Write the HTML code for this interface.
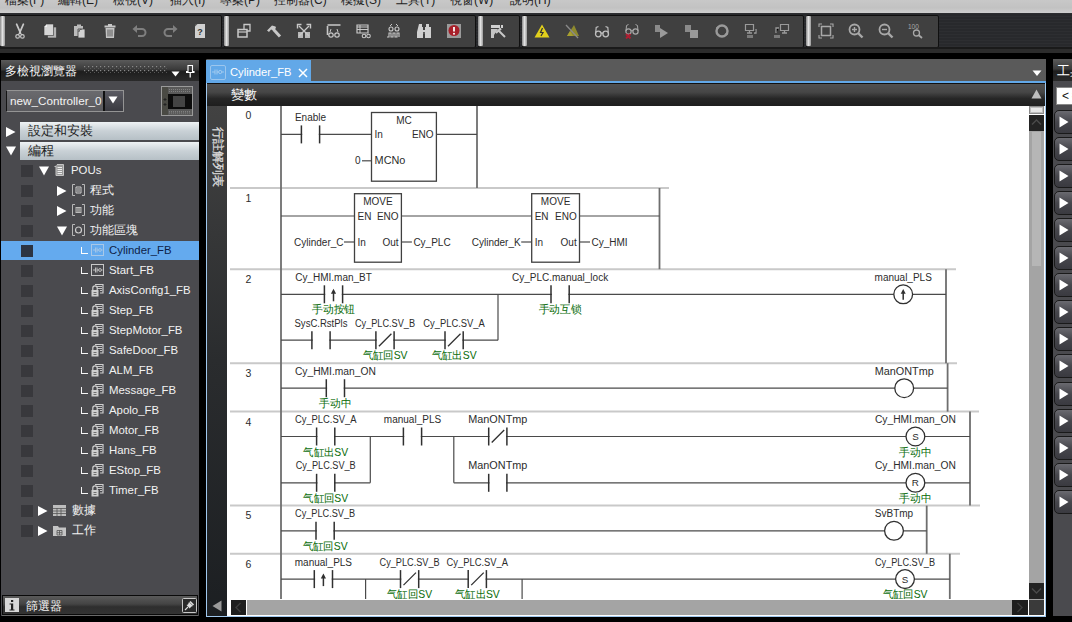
<!DOCTYPE html>
<html><head><meta charset="utf-8">
<style>
*{box-sizing:border-box;margin:0;padding:0}
html,body{width:1072px;height:622px;overflow:hidden;background:#000;font-family:"Liberation Sans",sans-serif;position:relative}
.a{position:absolute}
#menu{left:0;top:0;width:1072px;height:13px;background:linear-gradient(#c8c8c8,#c2c2c2 60%,#cfcfcf);overflow:hidden}
#menu span{position:absolute;top:-8px;font-size:12px;color:#222;white-space:nowrap}
#tb{left:0;top:13px;width:1072px;height:35px;background:repeating-linear-gradient(#2d2e31 0,#2d2e31 1.5px,#28292c 1.5px,#28292c 3px)}
.grp{position:absolute;top:1.5px;height:33px;background:#404040;border:1.5px solid #101010;border-radius:2px}
.hdl{position:absolute;top:3px;width:5px;height:30px;background:linear-gradient(90deg,#8a8a8a,#e2e2e2 50%,#9a9a9a);border-radius:1px}
#tb2{left:0;top:47px;width:1072px;height:6px;background:linear-gradient(#1a1a1a 0,#1a1a1a 2px,#2c2c2c 2px)}
/* left panel */
#lp{left:1px;top:60px;width:198px;height:556px;background:#4a4a4e}
#lph{left:1px;top:60px;width:198px;height:21px;background:linear-gradient(#5a5a5a,#3a3a3a 45%,#1e1e1e 55%,#2a2a2a);}
#lpm{left:1px;top:81px;width:198px;height:40px;background:#49494d}
.sec{position:absolute;left:20px;width:179px;height:18px;background:linear-gradient(#eef2f4,#c9d1d6 50%,#b6c0c6);font-size:13px;color:#1e1e1e;padding-left:8px;line-height:18px}
.t{white-space:nowrap;line-height:18px}
.trow{position:absolute;left:1px;width:198px;height:20px;font-size:11px;color:#eee;line-height:20px;white-space:nowrap}
.sq{position:absolute;left:20px;top:4px;width:13px;height:12px;background:#38383c}
.tri{position:absolute;font-size:11px;color:#fff}
#lpf{left:2px;top:595px;width:196px;height:20px;background:linear-gradient(#5a5a5a,#444 45%,#2e2e2e 60%,#333);border:1.5px solid #0a0a0a;box-shadow:0 1px 0 #6a6a6a}
/* editor */
#ed{left:206px;top:59px;width:840px;height:558px;background:#555}
#tabs{left:206px;top:59px;width:840px;height:23px;background:#5a5a5a;border-left:1px solid #3a3a3a}
#tab{left:206px;top:60px;width:105px;height:22px;background:#62a8e8}
#frame{left:206px;top:82px;width:840px;height:535px;border:1px solid #a0c8ee;background:#fff}
#hdr{left:207px;top:83px;width:838px;height:23px;background:linear-gradient(#111 0,#111 1px,#505050 1px,#464646 40%,#262626 68%,#1e1e1e)}
#rc{left:207px;top:106px;width:20px;height:510px;background:linear-gradient(#424242,#2a2c2e 50%,#1c1f22)}
#lad{left:227px;top:106px;width:802px;height:494px;background:#fff;overflow:hidden}
#vs{left:1029px;top:106px;width:15px;height:494px;background:#a4a4a4}
#hs{left:227px;top:600px;width:802px;height:16px;background:#fff}
/* right panel */
#rp{left:1053px;top:59px;width:19px;height:557px;background:#4a4a4e}
#rph{left:1053px;top:59px;width:19px;height:22px;background:linear-gradient(#5a5a5a,#3a3a3a 45%,#1e1e1e 55%,#2a2a2a)}
</style></head><body>
<div id="menu" class="a">
<span style="left:5px">檔案(F)</span><span style="left:58px">編輯(E)</span><span style="left:113px">檢視(V)</span><span style="left:170px">插入(I)</span><span style="left:220px">專案(P)</span><span style="left:274px">控制器(C)</span><span style="left:341px">模擬(S)</span><span style="left:396px">工具(T)</span><span style="left:450px">視窗(W)</span><span style="left:510px">說明(H)</span>
</div>
<div id="tb" class="a">
<div class="grp" style="left:0;width:222px"></div><div class="hdl" style="left:0"></div>
<div class="grp" style="left:224px;width:252px"></div><div class="hdl" style="left:224px"></div>
<div class="grp" style="left:478px;width:42px"></div><div class="hdl" style="left:478px"></div>
<div class="grp" style="left:522px;width:282px"></div><div class="hdl" style="left:522px"></div>
<div class="grp" style="left:806px;width:133px"></div><div class="hdl" style="left:806px"></div>
</div>
<div id="tb2" class="a"></div>
<svg class="a" style="left:12.0px;top:23.0px" width="16" height="16" viewBox="0 0 16 16"><path d="M4.6,1.2L8.3,9.6M11.4,1.2L7.7,9.6" stroke="#c8c8c8" stroke-width="1.7" stroke-linecap="round" fill="none"/><path d="M7.8,9.5L6.2,12M8.2,9.5L9.8,12" stroke="#c8c8c8" stroke-width="1.1"/><circle cx="5.6" cy="13.4" r="1.8" fill="none" stroke="#c8c8c8" stroke-width="1.2"/><circle cx="10.4" cy="13.4" r="1.8" fill="none" stroke="#c8c8c8" stroke-width="1.2"/></svg>
<svg class="a" style="left:42.0px;top:23.0px" width="16" height="16" viewBox="0 0 16 16"><path d="M5.5,4H14.5V15H5.5Z" fill="#b4b4b4" stroke="#333" stroke-width="0.6"/><path d="M2,4L5,1H11.5V12.5H2Z" fill="#d6d6d6" stroke="#333" stroke-width="0.6"/><path d="M2,4H5V1Z" fill="#f0f0f0"/></svg>
<svg class="a" style="left:72.0px;top:23.0px" width="16" height="16" viewBox="0 0 16 16"><path d="M2,3H5V1.5H9V3H11V13H2Z" fill="#bbb"/><path d="M6,6H13V15H6Z" fill="#d2d2d2" stroke="#3f3f3f" stroke-width="0.8"/><path d="M7,9A2,2 0 0 1 9.5,6.5" stroke="#444" fill="none"/></svg>
<svg class="a" style="left:102.0px;top:23.0px" width="16" height="16" viewBox="0 0 16 16"><path d="M2.5,2.5H13.5V4.5H2.5Z M6,1H10V2.5H6Z" fill="#c8c8c8"/><path d="M3.5,5H12.5L12,15H4Z" fill="#c4c4c4"/><path d="M6,6.5V13.5M8,6.5V13.5M10,6.5V13.5" stroke="#5a5a5a" stroke-width="1"/></svg>
<svg class="a" style="left:132.0px;top:23.0px" width="16" height="16" viewBox="0 0 16 16"><path d="M3,6H10A3.5,3.5 0 0 1 10,13H6" stroke="#7f7f7f" stroke-width="2" fill="none"/><path d="M0.5,6L5,2V10Z" fill="#7f7f7f"/></svg>
<svg class="a" style="left:162.0px;top:23.0px" width="16" height="16" viewBox="0 0 16 16"><path d="M13,6H6A3.5,3.5 0 0 0 6,13H10" stroke="#7f7f7f" stroke-width="2" fill="none"/><path d="M15.5,6L11,2V10Z" fill="#7f7f7f"/></svg>
<svg class="a" style="left:192.0px;top:23.0px" width="16" height="16" viewBox="0 0 16 16"><path d="M3,1H13V15H3Z" fill="#d0d0d0"/><path d="M3,1L5.5,1L3,3.5Z" fill="#555"/><text x="8" y="12" font-size="9" font-weight="bold" text-anchor="middle" fill="#333" font-family="Liberation Sans">?</text></svg>
<svg class="a" style="left:236.0px;top:23.0px" width="16" height="16" viewBox="0 0 16 16"><path d="M8,1.5H14V8H8Z" fill="none" stroke="#c8c8c8" stroke-width="1.3"/><path d="M2,6.5H11V14H2Z" fill="#404040" stroke="#c8c8c8" stroke-width="1.5"/><path d="M2,9H11" stroke="#c8c8c8" stroke-width="1.2"/></svg>
<svg class="a" style="left:266.0px;top:23.0px" width="16" height="16" viewBox="0 0 16 16"><path d="M1,7.5L6,2.5L9.5,3.5L10,5L7.5,7.5L5,6.5L3,9Z" fill="#c8c8c8"/><path d="M7.5,6.5L14,13.5" stroke="#c8c8c8" stroke-width="3"/></svg>
<svg class="a" style="left:296.0px;top:23.0px" width="16" height="16" viewBox="0 0 16 16"><path d="M2,9H7V15H2ZM9,9H14V15H9Z" fill="#b8b8b8"/><path d="M3,3L13,13M13,3L3,13" stroke="#c8c8c8" stroke-width="1.3"/><path d="M1.5,5.5V1.5H5.5M14.5,5.5V1.5H10.5" stroke="#c8c8c8" stroke-width="1.4" fill="none"/></svg>
<svg class="a" style="left:326.0px;top:23.0px" width="16" height="16" viewBox="0 0 16 16"><path d="M1.5,2H14.5M1.5,3V12" stroke="#c8c8c8" stroke-width="1.6" fill="none"/><circle cx="5" cy="12" r="2.2" fill="none" stroke="#c8c8c8" stroke-width="1.2"/><circle cx="11" cy="12" r="2.2" fill="none" stroke="#c8c8c8" stroke-width="1.2"/><path d="M4,9L5,6M12,9L11,6" stroke="#c8c8c8"/></svg>
<svg class="a" style="left:356.0px;top:23.0px" width="16" height="16" viewBox="0 0 16 16"><path d="M1,2H12V10H1Z" fill="none" stroke="#c8c8c8" stroke-width="1.2"/><path d="M1,4H12M1,6.5H12M4,2V10" stroke="#c8c8c8" stroke-width="1"/><circle cx="8" cy="13" r="1.8" fill="none" stroke="#c8c8c8" stroke-width="1.1"/><circle cx="12.5" cy="13" r="1.8" fill="none" stroke="#c8c8c8" stroke-width="1.1"/></svg>
<svg class="a" style="left:386.0px;top:23.0px" width="16" height="16" viewBox="0 0 16 16"><circle cx="5" cy="6" r="2" fill="none" stroke="#c8c8c8" stroke-width="1.1"/><circle cx="11" cy="6" r="2" fill="none" stroke="#c8c8c8" stroke-width="1.1"/><path d="M4,3L6,1M12,3L10,1" stroke="#c8c8c8"/><path d="M1,14H3V10H5V14H7V10H9V14H11V10H13V14" stroke="#c8c8c8" stroke-width="1.1" fill="none"/></svg>
<svg class="a" style="left:416.0px;top:23.0px" width="16" height="16" viewBox="0 0 16 16"><path d="M3,1H6V4H7V15H1L1,9Z M10,1H13V4H15L15,15H9V4H10Z" fill="#d0d0d0"/><path d="M6,7H10V11H6Z" fill="#d0d0d0"/><circle cx="8" cy="10" r="1" fill="#333"/></svg>
<svg class="a" style="left:446.0px;top:23.0px" width="16" height="16" viewBox="0 0 16 16"><rect x="1" y="1" width="14" height="14" fill="#9a9a9a"/><circle cx="8" cy="7.5" r="5.5" fill="#a8202a"/><path d="M8,4V8.5" stroke="#fff" stroke-width="1.8"/><circle cx="8" cy="10.7" r="1" fill="#fff"/></svg>
<svg class="a" style="left:490.0px;top:23.0px" width="16" height="16" viewBox="0 0 16 16"><path d="M1,2H10V5H1ZM11,2H13V5H11Z" fill="#d0d0d0"/><path d="M1,6H8L4,12V15H1Z" fill="#c4c4c4"/><path d="M6,10L10,6L11,7M9,8L15,14" stroke="#c8c8c8" stroke-width="2"/></svg>
<svg class="a" style="left:534.0px;top:23.0px" width="16" height="16" viewBox="0 0 16 16"><path d="M8,1.5L15.5,14.5H0.5Z" fill="#e2d01c"/><path d="M8.5,5L6.5,9.5H9L7,13" stroke="#333" stroke-width="1.2" fill="none"/></svg>
<svg class="a" style="left:564.0px;top:23.0px" width="16" height="16" viewBox="0 0 16 16"><path d="M10,2L15,13H3Z" fill="#8e8a2e"/><path d="M6,8L9,13H3Z" fill="#a8a030"/><path d="M2,2L14,15" stroke="#8a8a8a" stroke-width="1.3"/></svg>
<svg class="a" style="left:594.0px;top:23.0px" width="16" height="16" viewBox="0 0 16 16"><circle cx="4.3" cy="11" r="2.8" fill="none" stroke="#bdbdbd" stroke-width="1.3"/><circle cx="11.7" cy="11" r="2.8" fill="none" stroke="#bdbdbd" stroke-width="1.3"/><path d="M1.6,10.5L2.2,4.5L4.5,3.5M14.4,10.5L13.8,4.5L11.5,3.5M7,10.5Q8,9.5 9,10.5" stroke="#bdbdbd" stroke-width="1.2" fill="none"/></svg>
<svg class="a" style="left:624.0px;top:23.0px" width="16" height="16" viewBox="0 0 16 16"><circle cx="4.5" cy="8.5" r="2.6" fill="none" stroke="#a8a8a8" stroke-width="1.2"/><circle cx="11.5" cy="8.5" r="2.6" fill="none" stroke="#a8a8a8" stroke-width="1.2"/><path d="M2,8L2.5,2.5L4.5,1.5M14,8L13.5,2.5L11.5,1.5M7,8Q8,7 9,8" stroke="#a8a8a8" fill="none"/><path d="M2,11L6.5,15.5M6.5,11L2,15.5" stroke="#b01c30" stroke-width="1.9"/></svg>
<svg class="a" style="left:654.0px;top:23.0px" width="16" height="16" viewBox="0 0 16 16"><path d="M1,2H6V9H1Z" fill="#8a8a8a"/><path d="M6,5L14,10L6,15Z" fill="#9a9a9a"/></svg>
<svg class="a" style="left:684.0px;top:23.0px" width="16" height="16" viewBox="0 0 16 16"><path d="M1,2H7V9H1Z" fill="#8a8a8a"/><path d="M6,7H14V15H6Z" fill="#9a9a9a"/></svg>
<svg class="a" style="left:714.0px;top:23.0px" width="16" height="16" viewBox="0 0 16 16"><circle cx="8" cy="8" r="5.5" fill="none" stroke="#9a9a9a" stroke-width="2.4"/><path d="M2,4L5,5L3,7Z M14,12L11,11L13,9Z" fill="#9a9a9a"/></svg>
<svg class="a" style="left:744.0px;top:23.0px" width="16" height="16" viewBox="0 0 16 16"><path d="M1.5,1.5H9.5V7.5H1.5Z" fill="none" stroke="#9a9a9a" stroke-width="1.2"/><path d="M5.5,8V10M3,10H8M12,6V10H10M4,12V15M6,12V15M8,12V15" stroke="#9a9a9a" stroke-width="1.3"/></svg>
<svg class="a" style="left:774.0px;top:23.0px" width="16" height="16" viewBox="0 0 16 16"><path d="M6.5,1.5H14.5V7.5H6.5Z" fill="none" stroke="#9a9a9a" stroke-width="1.2"/><path d="M10.5,8V10M8,10H13M2,10V5H5M1,12V15M3,12V15M5,12V15" stroke="#9a9a9a" stroke-width="1.3"/></svg>
<svg class="a" style="left:818.0px;top:23.0px" width="16" height="16" viewBox="0 0 16 16"><path d="M1,4V1H4M12,1H15V4M15,12V15H12M4,15H1V12" stroke="#a8a8a8" stroke-width="1.1" fill="none"/><rect x="3.5" y="3.5" width="9" height="9" fill="none" stroke="#a8a8a8" stroke-width="1.5"/></svg>
<svg class="a" style="left:848.0px;top:23.0px" width="16" height="16" viewBox="0 0 16 16"><circle cx="6.5" cy="6.5" r="5" fill="none" stroke="#a8a8a8" stroke-width="1.8"/><path d="M10,10L14.5,14.5" stroke="#a8a8a8" stroke-width="2.4"/><path d="M4,6.5H9M6.5,4V9" stroke="#a8a8a8" stroke-width="1.4"/></svg>
<svg class="a" style="left:878.0px;top:23.0px" width="16" height="16" viewBox="0 0 16 16"><circle cx="6.5" cy="6.5" r="5" fill="none" stroke="#a8a8a8" stroke-width="1.8"/><path d="M10,10L14.5,14.5" stroke="#a8a8a8" stroke-width="2.4"/><path d="M4,6.5H9" stroke="#a8a8a8" stroke-width="1.4"/></svg>
<svg class="a" style="left:908.0px;top:23.0px" width="16" height="16" viewBox="0 0 16 16"><text x="0" y="6" font-size="6.5" fill="#a8a8a8" font-family="Liberation Sans">100</text><circle cx="8.5" cy="10" r="3" fill="none" stroke="#a8a8a8" stroke-width="1.3"/><path d="M10.5,12L14,15" stroke="#a8a8a8" stroke-width="1.8"/></svg>

<div id="lp" class="a"></div>
<div id="lph" class="a"></div>
<div class="a sec" style="top:122px">設定和安裝</div>
<div class="a sec" style="top:142px">編程</div>
<svg class="a" style="left:6px;top:126.5px" width="10" height="10"><path d="M0,0 L9.5,5 L0,10Z" fill="#fff"/></svg>
<svg class="a" style="left:6px;top:145.5px" width="10" height="10"><path d="M0,0.5 L10,0.5 L5,9.5Z" fill="#fff"/></svg>
<div class="a" style="left:21px;top:165px;width:12px;height:12px;background:#38383c"></div>
<svg class="a" style="left:39px;top:165.5px" width="10" height="10"><path d="M0,0.5 L10,0.5 L5,9.5Z" fill="#fff"/></svg>
<svg class="a" style="left:54px;top:164px" width="10" height="12"><path d="M0.5,2.5H2V11.5H9.5V0.5H3" fill="#9a9a9a" stroke="#c4c4c4"/><path d="M3.5,3.5H8M3.5,5.5H8M3.5,7.5H8M3.5,9.5H8" stroke="#eee" stroke-width="1"/></svg>
<div class="a t" style="left:71px;top:161px;font-size:11.4px;color:#f2f2f2">POUs</div>
<div class="a" style="left:21px;top:185px;width:12px;height:12px;background:#38383c"></div>
<svg class="a" style="left:57px;top:185.5px" width="10" height="10"><path d="M0,0 L9.5,5 L0,10Z" fill="#fff"/></svg>
<svg class="a" style="left:72px;top:184px" width="13" height="12"><path d="M3,0.5H0.5V11.5H3M10,0.5H12.5V11.5H10" fill="none" stroke="#b8b8b8" stroke-width="1"/><path d="M4,3H9V9H4Z" fill="none" stroke="#ccc" stroke-width="1"/><path d="M5,5H8M5,7H8" stroke="#ccc"/></svg>
<div class="a t" style="left:90px;top:181px;font-size:12.3px;color:#f2f2f2">程式</div>
<div class="a" style="left:21px;top:205px;width:12px;height:12px;background:#38383c"></div>
<svg class="a" style="left:57px;top:205.5px" width="10" height="10"><path d="M0,0 L9.5,5 L0,10Z" fill="#fff"/></svg>
<svg class="a" style="left:72px;top:204px" width="13" height="12"><path d="M3,0.5H0.5V11.5H3M10,0.5H12.5V11.5H10" fill="none" stroke="#b8b8b8" stroke-width="1"/><path d="M3.5,3H9.5V9H3.5Z" fill="#bbb"/><path d="M4,5H9M4,7H9" stroke="#666"/></svg>
<div class="a t" style="left:90px;top:201px;font-size:12.3px;color:#f2f2f2">功能</div>
<div class="a" style="left:21px;top:225px;width:12px;height:12px;background:#38383c"></div>
<svg class="a" style="left:57px;top:225.5px" width="10" height="10"><path d="M0,0.5 L10,0.5 L5,9.5Z" fill="#fff"/></svg>
<svg class="a" style="left:72px;top:224px" width="13" height="12"><path d="M3,0.5H0.5V11.5H3M10,0.5H12.5V11.5H10" fill="none" stroke="#b8b8b8" stroke-width="1"/><circle cx="6.5" cy="6" r="3" fill="none" stroke="#ccc" stroke-width="1.2"/></svg>
<div class="a t" style="left:90px;top:221px;font-size:12.3px;color:#f2f2f2">功能區塊</div>
<div class="a" style="left:1px;top:241px;width:198px;height:19px;background:#64aaee"></div>
<div class="a" style="left:21px;top:245px;width:12px;height:12px;background:#2c3442"></div>
<div class="a" style="left:81px;top:247px;width:7px;height:7px;border-left:1.5px solid #ffffff;border-bottom:1.5px solid #ffffff"></div>
<svg class="a" style="left:91px;top:244px" width="13" height="12"><rect x="0.5" y="0.5" width="12" height="11" fill="none" stroke="#a8c8e8" stroke-width="1"/><path d="M2,6H4.5M4.5,3.5V8.5M6,3.5V8.5M6,6H7.5M10.5,6H11.5" stroke="#a8c8e8" stroke-width="0.9" fill="none"/><circle cx="9" cy="6" r="1.4" fill="none" stroke="#a8c8e8" stroke-width="0.9"/></svg>
<div class="a t" style="left:109px;top:241px;font-size:11.4px;color:#0e1e48">Cylinder_FB</div>
<div class="a" style="left:21px;top:265px;width:12px;height:12px;background:#38383c"></div>
<div class="a" style="left:81px;top:267px;width:7px;height:7px;border-left:1.5px solid #f4f4f4;border-bottom:1.5px solid #f4f4f4"></div>
<svg class="a" style="left:91px;top:264px" width="13" height="12"><rect x="0.5" y="0.5" width="12" height="11" fill="none" stroke="#c8c8c8" stroke-width="1"/><path d="M2,6H4.5M4.5,3.5V8.5M6,3.5V8.5M6,6H7.5M10.5,6H11.5" stroke="#c8c8c8" stroke-width="0.9" fill="none"/><circle cx="9" cy="6" r="1.4" fill="none" stroke="#c8c8c8" stroke-width="0.9"/></svg>
<div class="a t" style="left:109px;top:261px;font-size:11.4px;color:#f2f2f2">Start_FB</div>
<div class="a" style="left:21px;top:285px;width:12px;height:12px;background:#38383c"></div>
<div class="a" style="left:81px;top:287px;width:7px;height:7px;border-left:1.5px solid #f4f4f4;border-bottom:1.5px solid #f4f4f4"></div>
<svg class="a" style="left:91px;top:283px" width="13" height="14"><path d="M4,1.5H12V10H9" fill="none" stroke="#cfcfcf" stroke-width="1.2"/><path d="M6,3.5H11M6,5.5H11M9,7.5H11" stroke="#cfcfcf" stroke-width="0.9"/><rect x="0.5" y="7" width="7" height="6.5" fill="#cfcfcf"/><path d="M1.8,7V5A2.2,2.2 0 0 1 6.2,5V7" fill="none" stroke="#cfcfcf" stroke-width="1.2"/><path d="M2.5,9.5H5.5M2.5,11.5H5.5" stroke="#555" stroke-width="0.8"/></svg>
<div class="a t" style="left:109px;top:281px;font-size:11.4px;color:#f2f2f2">AxisConfig1_FB</div>
<div class="a" style="left:21px;top:305px;width:12px;height:12px;background:#38383c"></div>
<div class="a" style="left:81px;top:307px;width:7px;height:7px;border-left:1.5px solid #f4f4f4;border-bottom:1.5px solid #f4f4f4"></div>
<svg class="a" style="left:91px;top:303px" width="13" height="14"><path d="M4,1.5H12V10H9" fill="none" stroke="#cfcfcf" stroke-width="1.2"/><path d="M6,3.5H11M6,5.5H11M9,7.5H11" stroke="#cfcfcf" stroke-width="0.9"/><rect x="0.5" y="7" width="7" height="6.5" fill="#cfcfcf"/><path d="M1.8,7V5A2.2,2.2 0 0 1 6.2,5V7" fill="none" stroke="#cfcfcf" stroke-width="1.2"/><path d="M2.5,9.5H5.5M2.5,11.5H5.5" stroke="#555" stroke-width="0.8"/></svg>
<div class="a t" style="left:109px;top:301px;font-size:11.4px;color:#f2f2f2">Step_FB</div>
<div class="a" style="left:21px;top:325px;width:12px;height:12px;background:#38383c"></div>
<div class="a" style="left:81px;top:327px;width:7px;height:7px;border-left:1.5px solid #f4f4f4;border-bottom:1.5px solid #f4f4f4"></div>
<svg class="a" style="left:91px;top:323px" width="13" height="14"><path d="M4,1.5H12V10H9" fill="none" stroke="#cfcfcf" stroke-width="1.2"/><path d="M6,3.5H11M6,5.5H11M9,7.5H11" stroke="#cfcfcf" stroke-width="0.9"/><rect x="0.5" y="7" width="7" height="6.5" fill="#cfcfcf"/><path d="M1.8,7V5A2.2,2.2 0 0 1 6.2,5V7" fill="none" stroke="#cfcfcf" stroke-width="1.2"/><path d="M2.5,9.5H5.5M2.5,11.5H5.5" stroke="#555" stroke-width="0.8"/></svg>
<div class="a t" style="left:109px;top:321px;font-size:11.4px;color:#f2f2f2">StepMotor_FB</div>
<div class="a" style="left:21px;top:345px;width:12px;height:12px;background:#38383c"></div>
<div class="a" style="left:81px;top:347px;width:7px;height:7px;border-left:1.5px solid #f4f4f4;border-bottom:1.5px solid #f4f4f4"></div>
<svg class="a" style="left:91px;top:343px" width="13" height="14"><path d="M4,1.5H12V10H9" fill="none" stroke="#cfcfcf" stroke-width="1.2"/><path d="M6,3.5H11M6,5.5H11M9,7.5H11" stroke="#cfcfcf" stroke-width="0.9"/><rect x="0.5" y="7" width="7" height="6.5" fill="#cfcfcf"/><path d="M1.8,7V5A2.2,2.2 0 0 1 6.2,5V7" fill="none" stroke="#cfcfcf" stroke-width="1.2"/><path d="M2.5,9.5H5.5M2.5,11.5H5.5" stroke="#555" stroke-width="0.8"/></svg>
<div class="a t" style="left:109px;top:341px;font-size:11.4px;color:#f2f2f2">SafeDoor_FB</div>
<div class="a" style="left:21px;top:365px;width:12px;height:12px;background:#38383c"></div>
<div class="a" style="left:81px;top:367px;width:7px;height:7px;border-left:1.5px solid #f4f4f4;border-bottom:1.5px solid #f4f4f4"></div>
<svg class="a" style="left:91px;top:363px" width="13" height="14"><path d="M4,1.5H12V10H9" fill="none" stroke="#cfcfcf" stroke-width="1.2"/><path d="M6,3.5H11M6,5.5H11M9,7.5H11" stroke="#cfcfcf" stroke-width="0.9"/><rect x="0.5" y="7" width="7" height="6.5" fill="#cfcfcf"/><path d="M1.8,7V5A2.2,2.2 0 0 1 6.2,5V7" fill="none" stroke="#cfcfcf" stroke-width="1.2"/><path d="M2.5,9.5H5.5M2.5,11.5H5.5" stroke="#555" stroke-width="0.8"/></svg>
<div class="a t" style="left:109px;top:361px;font-size:11.4px;color:#f2f2f2">ALM_FB</div>
<div class="a" style="left:21px;top:385px;width:12px;height:12px;background:#38383c"></div>
<div class="a" style="left:81px;top:387px;width:7px;height:7px;border-left:1.5px solid #f4f4f4;border-bottom:1.5px solid #f4f4f4"></div>
<svg class="a" style="left:91px;top:383px" width="13" height="14"><path d="M4,1.5H12V10H9" fill="none" stroke="#cfcfcf" stroke-width="1.2"/><path d="M6,3.5H11M6,5.5H11M9,7.5H11" stroke="#cfcfcf" stroke-width="0.9"/><rect x="0.5" y="7" width="7" height="6.5" fill="#cfcfcf"/><path d="M1.8,7V5A2.2,2.2 0 0 1 6.2,5V7" fill="none" stroke="#cfcfcf" stroke-width="1.2"/><path d="M2.5,9.5H5.5M2.5,11.5H5.5" stroke="#555" stroke-width="0.8"/></svg>
<div class="a t" style="left:109px;top:381px;font-size:11.4px;color:#f2f2f2">Message_FB</div>
<div class="a" style="left:21px;top:405px;width:12px;height:12px;background:#38383c"></div>
<div class="a" style="left:81px;top:407px;width:7px;height:7px;border-left:1.5px solid #f4f4f4;border-bottom:1.5px solid #f4f4f4"></div>
<svg class="a" style="left:91px;top:403px" width="13" height="14"><path d="M4,1.5H12V10H9" fill="none" stroke="#cfcfcf" stroke-width="1.2"/><path d="M6,3.5H11M6,5.5H11M9,7.5H11" stroke="#cfcfcf" stroke-width="0.9"/><rect x="0.5" y="7" width="7" height="6.5" fill="#cfcfcf"/><path d="M1.8,7V5A2.2,2.2 0 0 1 6.2,5V7" fill="none" stroke="#cfcfcf" stroke-width="1.2"/><path d="M2.5,9.5H5.5M2.5,11.5H5.5" stroke="#555" stroke-width="0.8"/></svg>
<div class="a t" style="left:109px;top:401px;font-size:11.4px;color:#f2f2f2">Apolo_FB</div>
<div class="a" style="left:21px;top:425px;width:12px;height:12px;background:#38383c"></div>
<div class="a" style="left:81px;top:427px;width:7px;height:7px;border-left:1.5px solid #f4f4f4;border-bottom:1.5px solid #f4f4f4"></div>
<svg class="a" style="left:91px;top:423px" width="13" height="14"><path d="M4,1.5H12V10H9" fill="none" stroke="#cfcfcf" stroke-width="1.2"/><path d="M6,3.5H11M6,5.5H11M9,7.5H11" stroke="#cfcfcf" stroke-width="0.9"/><rect x="0.5" y="7" width="7" height="6.5" fill="#cfcfcf"/><path d="M1.8,7V5A2.2,2.2 0 0 1 6.2,5V7" fill="none" stroke="#cfcfcf" stroke-width="1.2"/><path d="M2.5,9.5H5.5M2.5,11.5H5.5" stroke="#555" stroke-width="0.8"/></svg>
<div class="a t" style="left:109px;top:421px;font-size:11.4px;color:#f2f2f2">Motor_FB</div>
<div class="a" style="left:21px;top:445px;width:12px;height:12px;background:#38383c"></div>
<div class="a" style="left:81px;top:447px;width:7px;height:7px;border-left:1.5px solid #f4f4f4;border-bottom:1.5px solid #f4f4f4"></div>
<svg class="a" style="left:91px;top:443px" width="13" height="14"><path d="M4,1.5H12V10H9" fill="none" stroke="#cfcfcf" stroke-width="1.2"/><path d="M6,3.5H11M6,5.5H11M9,7.5H11" stroke="#cfcfcf" stroke-width="0.9"/><rect x="0.5" y="7" width="7" height="6.5" fill="#cfcfcf"/><path d="M1.8,7V5A2.2,2.2 0 0 1 6.2,5V7" fill="none" stroke="#cfcfcf" stroke-width="1.2"/><path d="M2.5,9.5H5.5M2.5,11.5H5.5" stroke="#555" stroke-width="0.8"/></svg>
<div class="a t" style="left:109px;top:441px;font-size:11.4px;color:#f2f2f2">Hans_FB</div>
<div class="a" style="left:21px;top:465px;width:12px;height:12px;background:#38383c"></div>
<div class="a" style="left:81px;top:467px;width:7px;height:7px;border-left:1.5px solid #f4f4f4;border-bottom:1.5px solid #f4f4f4"></div>
<svg class="a" style="left:91px;top:463px" width="13" height="14"><path d="M4,1.5H12V10H9" fill="none" stroke="#cfcfcf" stroke-width="1.2"/><path d="M6,3.5H11M6,5.5H11M9,7.5H11" stroke="#cfcfcf" stroke-width="0.9"/><rect x="0.5" y="7" width="7" height="6.5" fill="#cfcfcf"/><path d="M1.8,7V5A2.2,2.2 0 0 1 6.2,5V7" fill="none" stroke="#cfcfcf" stroke-width="1.2"/><path d="M2.5,9.5H5.5M2.5,11.5H5.5" stroke="#555" stroke-width="0.8"/></svg>
<div class="a t" style="left:109px;top:461px;font-size:11.4px;color:#f2f2f2">EStop_FB</div>
<div class="a" style="left:21px;top:485px;width:12px;height:12px;background:#38383c"></div>
<div class="a" style="left:81px;top:487px;width:7px;height:7px;border-left:1.5px solid #f4f4f4;border-bottom:1.5px solid #f4f4f4"></div>
<svg class="a" style="left:91px;top:483px" width="13" height="14"><path d="M4,1.5H12V10H9" fill="none" stroke="#cfcfcf" stroke-width="1.2"/><path d="M6,3.5H11M6,5.5H11M9,7.5H11" stroke="#cfcfcf" stroke-width="0.9"/><rect x="0.5" y="7" width="7" height="6.5" fill="#cfcfcf"/><path d="M1.8,7V5A2.2,2.2 0 0 1 6.2,5V7" fill="none" stroke="#cfcfcf" stroke-width="1.2"/><path d="M2.5,9.5H5.5M2.5,11.5H5.5" stroke="#555" stroke-width="0.8"/></svg>
<div class="a t" style="left:109px;top:481px;font-size:11.4px;color:#f2f2f2">Timer_FB</div>
<div class="a" style="left:21px;top:505px;width:12px;height:12px;background:#38383c"></div>
<svg class="a" style="left:38px;top:505.5px" width="10" height="10"><path d="M0,0 L9.5,5 L0,10Z" fill="#fff"/></svg>
<svg class="a" style="left:53px;top:505px" width="13" height="11"><rect x="0" y="0" width="13" height="11" fill="#bdbdbd"/><path d="M0,3.5H13M0,6H13M0,8.5H13M4,3V11M8,3V11" stroke="#555" stroke-width="0.8"/></svg>
<div class="a t" style="left:72px;top:501px;font-size:12.3px;color:#f2f2f2">數據</div>
<div class="a" style="left:21px;top:525px;width:12px;height:12px;background:#38383c"></div>
<svg class="a" style="left:38px;top:525.5px" width="10" height="10"><path d="M0,0 L9.5,5 L0,10Z" fill="#fff"/></svg>
<svg class="a" style="left:53px;top:525px" width="13" height="11"><path d="M0,1H5L6,2.5H13V11H0Z" fill="#c4c4c4"/><path d="M4,5.5H9V10H4ZM6.5,5.5V10M4,7.7H9" stroke="#555" stroke-width="0.8" fill="none"/></svg>
<div class="a t" style="left:72px;top:521px;font-size:12.3px;color:#f2f2f2">工作</div>
<div id="lpf" class="a"></div>

<div id="ed" class="a"></div>
<div id="tabs" class="a"></div>
<div id="tab" class="a"></div>
<div id="frame" class="a"></div>
<div id="hdr" class="a"></div>
<div id="rc" class="a"></div>
<div id="lad" class="a"></div>
<svg class="a" style="left:227px;top:106px" width="802" height="494" viewBox="227 106 802 494" font-family="Liberation Sans, sans-serif"><line x1="230" y1="188" x2="669" y2="188" stroke="#c9c9c9" stroke-width="2"/><line x1="230" y1="269.2" x2="956" y2="269.2" stroke="#c9c9c9" stroke-width="2"/><line x1="230" y1="363.2" x2="957" y2="363.2" stroke="#c9c9c9" stroke-width="2"/><line x1="230" y1="411.6" x2="979" y2="411.6" stroke="#c9c9c9" stroke-width="2"/><line x1="230" y1="505.6" x2="980" y2="505.6" stroke="#c9c9c9" stroke-width="2"/><line x1="230" y1="553.8" x2="960" y2="553.8" stroke="#c9c9c9" stroke-width="2"/><text x="248.5" y="118.7" text-anchor="middle" font-size="10.5" fill="#2c2c2c">0</text><text x="248.5" y="201.7" text-anchor="middle" font-size="10.5" fill="#2c2c2c">1</text><text x="248.5" y="282.7" text-anchor="middle" font-size="10.5" fill="#2c2c2c">2</text><text x="248.5" y="376.7" text-anchor="middle" font-size="10.5" fill="#2c2c2c">3</text><text x="248.5" y="425.7" text-anchor="middle" font-size="10.5" fill="#2c2c2c">4</text><text x="248.5" y="518.7" text-anchor="middle" font-size="10.5" fill="#2c2c2c">5</text><text x="248.5" y="567.7" text-anchor="middle" font-size="10.5" fill="#2c2c2c">6</text><line x1="281" y1="106" x2="281" y2="600" stroke="#6e6e6e" stroke-width="1.8"/><line x1="477" y1="106" x2="477" y2="188" stroke="#6e6e6e" stroke-width="1.8"/><line x1="659.5" y1="188" x2="659.5" y2="269.2" stroke="#6e6e6e" stroke-width="1.8"/><line x1="946" y1="269.2" x2="946" y2="363.2" stroke="#6e6e6e" stroke-width="1.8"/><line x1="947.6" y1="363.2" x2="947.6" y2="411.6" stroke="#6e6e6e" stroke-width="1.8"/><line x1="970" y1="411.6" x2="970" y2="505.6" stroke="#6e6e6e" stroke-width="1.8"/><line x1="926.7" y1="505.6" x2="926.7" y2="553.8" stroke="#6e6e6e" stroke-width="1.8"/><line x1="949.8" y1="553.8" x2="949.8" y2="600" stroke="#6e6e6e" stroke-width="1.8"/><line x1="281" y1="134.4" x2="371.5" y2="134.4" stroke="#4a4a4a" stroke-width="1.2"/><rect x="302.2" y="132.4" width="16.6" height="4" fill="#fff"/><line x1="301.4" y1="125.4" x2="301.4" y2="143.4" stroke="#303030" stroke-width="1.5"/><line x1="319.59999999999997" y1="125.4" x2="319.59999999999997" y2="143.4" stroke="#303030" stroke-width="1.5"/><text x="310.5" y="121.0" text-anchor="middle" font-size="10" fill="#2c2c2c">Enable</text><rect x="371.5" y="112.5" width="64.89999999999998" height="68.69999999999999" fill="none" stroke="#404040" stroke-width="1.3"/><text x="404" y="123.9" text-anchor="middle" font-size="10" fill="#2c2c2c">MC</text><text x="374.6" y="138.1" text-anchor="start" font-size="10" fill="#2c2c2c">In</text><text x="433.6" y="138.1" text-anchor="end" font-size="10" fill="#2c2c2c">ENO</text><text x="374.6" y="163.8" text-anchor="start" font-size="10" fill="#2c2c2c" textLength="30.8" lengthAdjust="spacingAndGlyphs">MCNo</text><text x="355" y="163.8" text-anchor="start" font-size="10" fill="#2c2c2c">0</text><line x1="362" y1="160.8" x2="371.5" y2="160.8" stroke="#4a4a4a" stroke-width="1.2"/><line x1="436.4" y1="134.4" x2="477" y2="134.4" stroke="#4a4a4a" stroke-width="1.2"/><line x1="281" y1="216" x2="659.5" y2="216" stroke="#4a4a4a" stroke-width="1.2"/><rect x="354.5" y="193.7" width="46.89999999999998" height="68.5" fill="#fff" stroke="#404040" stroke-width="1.3"/><text x="377.95" y="204.7" text-anchor="middle" font-size="10" fill="#2c2c2c">MOVE</text><text x="357.5" y="219.6" text-anchor="start" font-size="10" fill="#2c2c2c">EN</text><text x="398.59999999999997" y="219.6" text-anchor="end" font-size="10" fill="#2c2c2c">ENO</text><text x="357.5" y="245.6" text-anchor="start" font-size="10" fill="#2c2c2c">In</text><text x="398.59999999999997" y="245.6" text-anchor="end" font-size="10" fill="#2c2c2c">Out</text><line x1="344.0" y1="242" x2="354.5" y2="242" stroke="#4a4a4a" stroke-width="1.2"/><text x="343.5" y="245.6" text-anchor="end" font-size="10" fill="#2c2c2c">Cylinder_C</text><line x1="401.4" y1="242" x2="411.9" y2="242" stroke="#4a4a4a" stroke-width="1.2"/><text x="413.4" y="245.6" text-anchor="start" font-size="10" fill="#2c2c2c">Cy_PLC</text><rect x="531.7" y="193.7" width="47.799999999999955" height="68.5" fill="#fff" stroke="#404040" stroke-width="1.3"/><text x="555.6" y="204.7" text-anchor="middle" font-size="10" fill="#2c2c2c">MOVE</text><text x="534.7" y="219.6" text-anchor="start" font-size="10" fill="#2c2c2c">EN</text><text x="576.7" y="219.6" text-anchor="end" font-size="10" fill="#2c2c2c">ENO</text><text x="534.7" y="245.6" text-anchor="start" font-size="10" fill="#2c2c2c">In</text><text x="576.7" y="245.6" text-anchor="end" font-size="10" fill="#2c2c2c">Out</text><line x1="521.2" y1="242" x2="531.7" y2="242" stroke="#4a4a4a" stroke-width="1.2"/><text x="520.7" y="245.6" text-anchor="end" font-size="10" fill="#2c2c2c">Cylinder_K</text><line x1="579.5" y1="242" x2="590.0" y2="242" stroke="#4a4a4a" stroke-width="1.2"/><text x="591.5" y="245.6" text-anchor="start" font-size="10" fill="#2c2c2c">Cy_HMI</text><line x1="281" y1="294.3" x2="946" y2="294.3" stroke="#4a4a4a" stroke-width="1.2"/><rect x="325.2" y="292.3" width="16.6" height="4" fill="#fff"/><line x1="324.4" y1="285.3" x2="324.4" y2="303.3" stroke="#303030" stroke-width="1.5"/><line x1="342.59999999999997" y1="285.3" x2="342.59999999999997" y2="303.3" stroke="#303030" stroke-width="1.5"/><line x1="333.5" y1="292.3" x2="333.5" y2="301.3" stroke="#303030" stroke-width="1.5"/><path d="M330.9,293.8 L333.5,288.8 L336.1,293.8Z" fill="#303030"/><text x="333.5" y="280.90000000000003" text-anchor="middle" font-size="10" fill="#2c2c2c">Cy_HMI.man_BT</text><text x="333.5" y="313.3" text-anchor="middle" font-size="11" fill="#0b6e0b" textLength="43" lengthAdjust="spacingAndGlyphs" stroke="#0b6e0b" stroke-width="0.05">手动按钮</text><rect x="551.8" y="292.3" width="16.6" height="4" fill="#fff"/><line x1="551" y1="285.3" x2="551" y2="303.3" stroke="#303030" stroke-width="1.5"/><line x1="569.2" y1="285.3" x2="569.2" y2="303.3" stroke="#303030" stroke-width="1.5"/><text x="560.1" y="280.90000000000003" text-anchor="middle" font-size="10" fill="#2c2c2c">Cy_PLC.manual_lock</text><text x="560.1" y="313.3" text-anchor="middle" font-size="11" fill="#0b6e0b" textLength="43" lengthAdjust="spacingAndGlyphs" stroke="#0b6e0b" stroke-width="0.05">手动互锁</text><circle cx="903.2" cy="294.3" r="9.4" fill="#fff" stroke="#303030" stroke-width="1.3"/><line x1="903.2" y1="292.3" x2="903.2" y2="299.8" stroke="#303030" stroke-width="1.5"/><path d="M900.7,293.8 L903.2,289.1 L905.7,293.8Z" fill="#303030"/><text x="903.2" y="280.90000000000003" text-anchor="middle" font-size="10" fill="#2c2c2c">manual_PLS</text><line x1="281" y1="340.2" x2="498" y2="340.2" stroke="#4a4a4a" stroke-width="1.2"/><line x1="498" y1="294.3" x2="498" y2="340.2" stroke="#4a4a4a" stroke-width="1.2"/><rect x="312.7" y="338.2" width="16.6" height="4" fill="#fff"/><line x1="311.9" y1="331.2" x2="311.9" y2="349.2" stroke="#303030" stroke-width="1.5"/><line x1="330.09999999999997" y1="331.2" x2="330.09999999999997" y2="349.2" stroke="#303030" stroke-width="1.5"/><text x="321.0" y="326.8" text-anchor="middle" font-size="10" fill="#2c2c2c" textLength="53" lengthAdjust="spacingAndGlyphs">SysC.RstPls</text><rect x="376.7" y="338.2" width="16.6" height="4" fill="#fff"/><line x1="375.9" y1="331.2" x2="375.9" y2="349.2" stroke="#303030" stroke-width="1.5"/><line x1="394.09999999999997" y1="331.2" x2="394.09999999999997" y2="349.2" stroke="#303030" stroke-width="1.5"/><line x1="378.9" y1="346.2" x2="391.4" y2="333.7" stroke="#303030" stroke-width="1.3"/><text x="385.0" y="326.8" text-anchor="middle" font-size="10" fill="#2c2c2c" textLength="60" lengthAdjust="spacingAndGlyphs">Cy_PLC.SV_B</text><text x="385.0" y="359.2" text-anchor="middle" font-size="11" fill="#0b6e0b" textLength="45" lengthAdjust="spacingAndGlyphs" stroke="#0b6e0b" stroke-width="0.05">气缸回SV</text><rect x="445.8" y="338.2" width="16.6" height="4" fill="#fff"/><line x1="445" y1="331.2" x2="445" y2="349.2" stroke="#303030" stroke-width="1.5"/><line x1="463.2" y1="331.2" x2="463.2" y2="349.2" stroke="#303030" stroke-width="1.5"/><line x1="448" y1="346.2" x2="460.5" y2="333.7" stroke="#303030" stroke-width="1.3"/><text x="454.1" y="326.8" text-anchor="middle" font-size="10" fill="#2c2c2c" textLength="61.5" lengthAdjust="spacingAndGlyphs">Cy_PLC.SV_A</text><text x="454.1" y="359.2" text-anchor="middle" font-size="11" fill="#0b6e0b" textLength="45" lengthAdjust="spacingAndGlyphs" stroke="#0b6e0b" stroke-width="0.05">气缸出SV</text><line x1="281" y1="388.2" x2="947.6" y2="388.2" stroke="#4a4a4a" stroke-width="1.2"/><rect x="327.1" y="386.2" width="16.6" height="4" fill="#fff"/><line x1="326.3" y1="379.2" x2="326.3" y2="397.2" stroke="#303030" stroke-width="1.5"/><line x1="344.5" y1="379.2" x2="344.5" y2="397.2" stroke="#303030" stroke-width="1.5"/><text x="335.40000000000003" y="374.8" text-anchor="middle" font-size="10" fill="#2c2c2c" textLength="81" lengthAdjust="spacingAndGlyphs">Cy_HMI.man_ON</text><text x="335.40000000000003" y="407.2" text-anchor="middle" font-size="11" fill="#0b6e0b" textLength="32" lengthAdjust="spacingAndGlyphs" stroke="#0b6e0b" stroke-width="0.05">手动中</text><circle cx="904.2" cy="388.2" r="9.4" fill="#fff" stroke="#303030" stroke-width="1.3"/><text x="904.2" y="374.8" text-anchor="middle" font-size="10" fill="#2c2c2c" textLength="59" lengthAdjust="spacingAndGlyphs">ManONTmp</text><line x1="281" y1="436.5" x2="970" y2="436.5" stroke="#4a4a4a" stroke-width="1.2"/><line x1="281" y1="482.8" x2="370.3" y2="482.8" stroke="#4a4a4a" stroke-width="1.2"/><line x1="370.3" y1="436.5" x2="370.3" y2="482.8" stroke="#4a4a4a" stroke-width="1.2"/><line x1="453.8" y1="436.5" x2="453.8" y2="482.8" stroke="#4a4a4a" stroke-width="1.2"/><line x1="453.8" y1="482.8" x2="970" y2="482.8" stroke="#4a4a4a" stroke-width="1.2"/><rect x="317.40000000000003" y="434.5" width="16.6" height="4" fill="#fff"/><line x1="316.6" y1="427.5" x2="316.6" y2="445.5" stroke="#303030" stroke-width="1.5"/><line x1="334.8" y1="427.5" x2="334.8" y2="445.5" stroke="#303030" stroke-width="1.5"/><text x="325.70000000000005" y="423.1" text-anchor="middle" font-size="10" fill="#2c2c2c" textLength="61.5" lengthAdjust="spacingAndGlyphs">Cy_PLC.SV_A</text><text x="325.70000000000005" y="455.5" text-anchor="middle" font-size="11" fill="#0b6e0b" textLength="45" lengthAdjust="spacingAndGlyphs" stroke="#0b6e0b" stroke-width="0.05">气缸出SV</text><rect x="317.40000000000003" y="480.8" width="16.6" height="4" fill="#fff"/><line x1="316.6" y1="473.8" x2="316.6" y2="491.8" stroke="#303030" stroke-width="1.5"/><line x1="334.8" y1="473.8" x2="334.8" y2="491.8" stroke="#303030" stroke-width="1.5"/><text x="325.70000000000005" y="469.40000000000003" text-anchor="middle" font-size="10" fill="#2c2c2c" textLength="60" lengthAdjust="spacingAndGlyphs">Cy_PLC.SV_B</text><text x="325.70000000000005" y="501.8" text-anchor="middle" font-size="11" fill="#0b6e0b" textLength="45" lengthAdjust="spacingAndGlyphs" stroke="#0b6e0b" stroke-width="0.05">气缸回SV</text><rect x="404.2" y="434.5" width="16.6" height="4" fill="#fff"/><line x1="403.4" y1="427.5" x2="403.4" y2="445.5" stroke="#303030" stroke-width="1.5"/><line x1="421.59999999999997" y1="427.5" x2="421.59999999999997" y2="445.5" stroke="#303030" stroke-width="1.5"/><text x="412.5" y="423.1" text-anchor="middle" font-size="10" fill="#2c2c2c">manual_PLS</text><rect x="489.5" y="434.5" width="16.6" height="4" fill="#fff"/><line x1="488.7" y1="427.5" x2="488.7" y2="445.5" stroke="#303030" stroke-width="1.5"/><line x1="506.9" y1="427.5" x2="506.9" y2="445.5" stroke="#303030" stroke-width="1.5"/><line x1="491.7" y1="442.5" x2="504.2" y2="430.0" stroke="#303030" stroke-width="1.3"/><text x="497.8" y="423.1" text-anchor="middle" font-size="10" fill="#2c2c2c" textLength="59" lengthAdjust="spacingAndGlyphs">ManONTmp</text><rect x="489.5" y="480.8" width="16.6" height="4" fill="#fff"/><line x1="488.7" y1="473.8" x2="488.7" y2="491.8" stroke="#303030" stroke-width="1.5"/><line x1="506.9" y1="473.8" x2="506.9" y2="491.8" stroke="#303030" stroke-width="1.5"/><text x="497.8" y="469.40000000000003" text-anchor="middle" font-size="10" fill="#2c2c2c" textLength="59" lengthAdjust="spacingAndGlyphs">ManONTmp</text><circle cx="915.4" cy="436.5" r="9.4" fill="#fff" stroke="#303030" stroke-width="1.3"/><text x="915.4" y="440.1" text-anchor="middle" font-size="9.8" fill="#2c2c2c">S</text><text x="915.4" y="423.1" text-anchor="middle" font-size="10" fill="#2c2c2c" textLength="81" lengthAdjust="spacingAndGlyphs">Cy_HMI.man_ON</text><text x="915.4" y="455.5" text-anchor="middle" font-size="11" fill="#0b6e0b" textLength="32" lengthAdjust="spacingAndGlyphs" stroke="#0b6e0b" stroke-width="0.05">手动中</text><circle cx="915.4" cy="482.8" r="9.4" fill="#fff" stroke="#303030" stroke-width="1.3"/><text x="915.4" y="486.40000000000003" text-anchor="middle" font-size="9.8" fill="#2c2c2c">R</text><text x="915.4" y="469.40000000000003" text-anchor="middle" font-size="10" fill="#2c2c2c" textLength="81" lengthAdjust="spacingAndGlyphs">Cy_HMI.man_ON</text><text x="915.4" y="501.8" text-anchor="middle" font-size="11" fill="#0b6e0b" textLength="32" lengthAdjust="spacingAndGlyphs" stroke="#0b6e0b" stroke-width="0.05">手动中</text><line x1="281" y1="530.8" x2="926.7" y2="530.8" stroke="#4a4a4a" stroke-width="1.2"/><rect x="316.8" y="528.8" width="16.6" height="4" fill="#fff"/><line x1="316" y1="521.8" x2="316" y2="539.8" stroke="#303030" stroke-width="1.5"/><line x1="334.2" y1="521.8" x2="334.2" y2="539.8" stroke="#303030" stroke-width="1.5"/><text x="325.1" y="517.4" text-anchor="middle" font-size="10" fill="#2c2c2c" textLength="60" lengthAdjust="spacingAndGlyphs">Cy_PLC.SV_B</text><text x="325.1" y="549.8" text-anchor="middle" font-size="11" fill="#0b6e0b" textLength="45" lengthAdjust="spacingAndGlyphs" stroke="#0b6e0b" stroke-width="0.05">气缸回SV</text><circle cx="894" cy="530.8" r="9.4" fill="#fff" stroke="#303030" stroke-width="1.3"/><text x="894" y="517.4" text-anchor="middle" font-size="10" fill="#2c2c2c">SvBTmp</text><line x1="281" y1="579.1" x2="949.8" y2="579.1" stroke="#4a4a4a" stroke-width="1.2"/><line x1="365.6" y1="579.1" x2="365.6" y2="600" stroke="#4a4a4a" stroke-width="1.2"/><line x1="522.1" y1="579.1" x2="522.1" y2="600" stroke="#4a4a4a" stroke-width="1.2"/><rect x="315.1" y="577.1" width="16.6" height="4" fill="#fff"/><line x1="314.3" y1="570.1" x2="314.3" y2="588.1" stroke="#303030" stroke-width="1.5"/><line x1="332.5" y1="570.1" x2="332.5" y2="588.1" stroke="#303030" stroke-width="1.5"/><line x1="323.40000000000003" y1="577.1" x2="323.40000000000003" y2="586.1" stroke="#303030" stroke-width="1.5"/><path d="M320.8,578.6 L323.40000000000003,573.6 L326.00000000000006,578.6Z" fill="#303030"/><text x="323.40000000000003" y="565.7" text-anchor="middle" font-size="10" fill="#2c2c2c">manual_PLS</text><rect x="401.3" y="577.1" width="16.6" height="4" fill="#fff"/><line x1="400.5" y1="570.1" x2="400.5" y2="588.1" stroke="#303030" stroke-width="1.5"/><line x1="418.7" y1="570.1" x2="418.7" y2="588.1" stroke="#303030" stroke-width="1.5"/><line x1="403.5" y1="585.1" x2="416.0" y2="572.6" stroke="#303030" stroke-width="1.3"/><text x="409.6" y="565.7" text-anchor="middle" font-size="10" fill="#2c2c2c" textLength="60" lengthAdjust="spacingAndGlyphs">Cy_PLC.SV_B</text><text x="409.6" y="598.1" text-anchor="middle" font-size="11" fill="#0b6e0b" textLength="45" lengthAdjust="spacingAndGlyphs" stroke="#0b6e0b" stroke-width="0.05">气缸回SV</text><rect x="469.0" y="577.1" width="16.6" height="4" fill="#fff"/><line x1="468.2" y1="570.1" x2="468.2" y2="588.1" stroke="#303030" stroke-width="1.5"/><line x1="486.4" y1="570.1" x2="486.4" y2="588.1" stroke="#303030" stroke-width="1.5"/><line x1="471.2" y1="585.1" x2="483.7" y2="572.6" stroke="#303030" stroke-width="1.3"/><text x="477.3" y="565.7" text-anchor="middle" font-size="10" fill="#2c2c2c" textLength="61.5" lengthAdjust="spacingAndGlyphs">Cy_PLC.SV_A</text><text x="477.3" y="598.1" text-anchor="middle" font-size="11" fill="#0b6e0b" textLength="45" lengthAdjust="spacingAndGlyphs" stroke="#0b6e0b" stroke-width="0.05">气缸出SV</text><circle cx="905" cy="579.1" r="9.4" fill="#fff" stroke="#303030" stroke-width="1.3"/><text x="905" y="582.7" text-anchor="middle" font-size="9.8" fill="#2c2c2c">S</text><text x="905" y="565.7" text-anchor="middle" font-size="10" fill="#2c2c2c" textLength="60" lengthAdjust="spacingAndGlyphs">Cy_PLC.SV_B</text><text x="905" y="598.1" text-anchor="middle" font-size="11" fill="#0b6e0b" textLength="45" lengthAdjust="spacingAndGlyphs" stroke="#0b6e0b" stroke-width="0.05">气缸回SV</text></svg>
<div id="vs" class="a"></div>
<div id="hs" class="a"></div>

<div id="rp" class="a"></div>
<div id="rph" class="a"></div>
<div class="a t" style="left:5px;top:62px;font-size:12px;color:#fafafa;line-height:18px">多檢視瀏覽器</div>
<svg class="a" style="left:83px;top:66px" width="84" height="8"><defs><pattern id="dp" width="4" height="4" patternUnits="userSpaceOnUse"><rect x="1" y="0" width="1.2" height="1.2" fill="#8a8a8a"/><rect x="3" y="2" width="1" height="1" fill="#555"/></pattern></defs><rect width="84" height="8" fill="url(#dp)"/></svg>
<svg class="a" style="left:171px;top:71px" width="9" height="6"><path d="M0.5,0.5H8.5L4.5,5.5Z" fill="#fff"/></svg>
<svg class="a" style="left:186px;top:65px" width="9" height="13"><path d="M2,0.5H6.5V6.5H8V7.5H0.5V6.5H2Z" fill="none" stroke="#fff" stroke-width="1.1"/><path d="M4.2,7.5V12.5" stroke="#fff" stroke-width="1.2"/></svg>
<div class="a" style="left:6px;top:90px;width:118px;height:22px;border:1px solid #949494;border-left-color:#151515;background:linear-gradient(#6a6a6e,#5a5a5e)"></div>
<div class="a" style="left:103px;top:91px;width:2px;height:20px;background:#111"></div>
<div class="a" style="left:104.5px;top:91px;width:18.5px;height:20px;background:linear-gradient(#5a5a62,#3a3a40)"></div>
<svg class="a" style="left:108px;top:96px" width="10" height="8"><path d="M0.5,0.5H9.5L5,7.5Z" fill="#fff"/></svg>
<div class="a t" style="left:10px;top:92px;font-size:11.7px;color:#f4f4f4;line-height:18px">new_Controller_0</div>
<div class="a" style="left:161px;top:86px;width:32px;height:30px;border:1px solid #9a9a9a;background:#555"></div>
<svg class="a" style="left:162px;top:87px" width="30" height="28"><rect x="0" y="0" width="30" height="28" fill="#5a5a5a"/><rect x="0" y="0" width="6" height="28" fill="#4a4a44"/><rect x="6" y="7" width="24" height="15" fill="#0c0c0c"/><rect x="11" y="9" width="12" height="11" fill="#444"/><path d="M7,2.5H29M7,4.5H29M7,24.5H29M7,26H29" stroke="#8a8a8a" stroke-width="0.8" stroke-dasharray="1,1"/><path d="M3,11V14M1.5,12.5H4.5M3,16V19M1.5,17.5H4.5" stroke="#222" stroke-width="1"/></svg>
<svg class="a" style="left:5px;top:598px" width="14" height="14"><rect width="14" height="14" fill="#d8d8d8"/><rect x="6" y="2" width="2.2" height="2" fill="#222"/><path d="M4.5,5.5H8.2V11.5H9.5V12.5H4.5V11.5H6V6.5H4.5Z" fill="#222"/></svg>
<div class="a t" style="left:25.5px;top:596.5px;font-size:12px;color:#f2f2f2;line-height:18px">篩選器</div>
<svg class="a" style="left:182px;top:598px" width="15" height="15"><rect x="0.5" y="0.5" width="14" height="14" fill="#2a2a2a" stroke="#c8c8c8" stroke-width="1" rx="1"/><path d="M7,4L11,8L9.5,8.5L7.5,10.5L7,9.5L4.5,7L6,6.5Z" fill="#ddd"/><path d="M6,9L3,12" stroke="#ddd" stroke-width="1.1"/><path d="M8,3.5L11.5,7" stroke="#ddd" stroke-width="1.6"/></svg>
<svg class="a" style="left:210px;top:65px" width="16" height="15"><rect x="0.5" y="0.5" width="15" height="14" rx="1.5" fill="none" stroke="#9cc6ee" stroke-width="1"/><path d="M2,7H5M5,4.5V9.5M7,4.5V9.5M7,7H8.5M12,7H14" stroke="#a8cef0" stroke-width="0.9" fill="none"/><circle cx="10.2" cy="7" r="1.6" fill="none" stroke="#a8cef0" stroke-width="0.9"/></svg>
<div class="a t" style="left:230px;top:63px;font-size:11.2px;color:#fff;line-height:18px">Cylinder_FB</div>
<svg class="a" style="left:298px;top:68px" width="10" height="10"><path d="M1,1L9,9M9,1L1,9" stroke="#fff" stroke-width="1.5"/></svg>
<svg class="a" style="left:1032px;top:70px" width="10" height="7"><path d="M0.5,0.5H9.5L5,6Z" fill="#fff"/></svg>
<div class="a" style="left:206px;top:81px;width:840px;height:2px;background:#62a8e8"></div>
<div class="a t" style="left:231px;top:86px;font-size:13px;color:#fff;line-height:18px">變數</div>
<svg class="a" style="left:1031px;top:89px" width="11" height="10"><path d="M5.5,0.5L10.5,9.5H0.5Z" fill="#bdbdbd"/></svg>
<div class="a t" style="left:187px;top:148.5px;width:62px;height:18px;font-size:12.3px;color:#dcdcdc;line-height:18px;transform:rotate(90deg);transform-origin:31px 9px;-webkit-text-stroke:0.3px #dcdcdc">行註解列表</div>
<svg class="a" style="left:212px;top:600px" width="10" height="12"><path d="M0.5,6L9.5,0.5V11.5Z" fill="#9a9a9a"/></svg>
<div class="a" style="left:1029px;top:106px;width:15px;height:8px;background:#8a8a8a"></div>
<div class="a" style="left:1030px;top:107px;width:13px;height:6px;background:#e6e6e6;border:1px solid #bdbdbd"></div>
<div class="a" style="left:1029px;top:114px;width:15px;height:1.5px;background:#fff"></div>
<div class="a" style="left:1029px;top:115px;width:15px;height:16px;background:#232323"></div>
<svg class="a" style="left:1031px;top:118px" width="11" height="8"><path d="M1,6.5L5.5,2L10,6.5" fill="none" stroke="#4a4a4a" stroke-width="1.4"/></svg>
<div class="a" style="left:1032px;top:132px;width:9px;height:134px;background:#b6b6b6"></div>
<div class="a" style="left:1029px;top:583px;width:15px;height:16px;background:#232323"></div>
<svg class="a" style="left:1031px;top:587px" width="11" height="8"><path d="M1,1.5L5.5,6L10,1.5" fill="none" stroke="#4a4a4a" stroke-width="1.4"/></svg>
<div class="a" style="left:227px;top:599px;width:802px;height:17px;background:#fff"></div>
<div class="a" style="left:231px;top:600px;width:15px;height:15px;background:#1e1e1e"></div>
<svg class="a" style="left:234px;top:602px" width="8" height="11"><path d="M6.5,1L2,5.5L6.5,10" fill="none" stroke="#3c3c3c" stroke-width="1.4"/></svg>
<div class="a" style="left:247px;top:600px;width:765px;height:15px;background:#a4a4a4"></div>
<div class="a" style="left:1012px;top:600px;width:15.5px;height:15px;background:#1e1e1e"></div>
<svg class="a" style="left:1016px;top:602px" width="8" height="11"><path d="M1.5,1L6,5.5L1.5,10" fill="none" stroke="#3c3c3c" stroke-width="1.4"/></svg>
<div class="a" style="left:1029px;top:600px;width:15px;height:15px;background:#3a3a3a"></div>
<div class="a t" style="left:1057px;top:62px;font-size:13px;color:#fff;line-height:18px">工具箱</div>
<div class="a" style="left:1056px;top:87px;width:20px;height:18px;background:#fff;border:1px solid #888"></div>
<div class="a t" style="left:1062px;top:87px;font-size:12px;color:#111;line-height:18px">&lt; 搜尋</div>
<div class="a" style="left:1054px;top:109.5px;width:30px;height:24px;border:1px solid #1a1a1a;border-radius:5px;background:linear-gradient(#6a6a70,#46464c 50%,#3a3a40)"></div>
<svg class="a" style="left:1059px;top:115.5px" width="10" height="12"><path d="M0.5,0.5L9.5,6L0.5,11.5Z" fill="#fff"/></svg>
<div class="a" style="left:1054px;top:136.7px;width:30px;height:24px;border:1px solid #1a1a1a;border-radius:5px;background:linear-gradient(#6a6a70,#46464c 50%,#3a3a40)"></div>
<svg class="a" style="left:1059px;top:142.7px" width="10" height="12"><path d="M0.5,0.5L9.5,6L0.5,11.5Z" fill="#fff"/></svg>
<div class="a" style="left:1054px;top:163.9px;width:30px;height:24px;border:1px solid #1a1a1a;border-radius:5px;background:linear-gradient(#6a6a70,#46464c 50%,#3a3a40)"></div>
<svg class="a" style="left:1059px;top:169.9px" width="10" height="12"><path d="M0.5,0.5L9.5,6L0.5,11.5Z" fill="#fff"/></svg>
<div class="a" style="left:1054px;top:191.1px;width:30px;height:24px;border:1px solid #1a1a1a;border-radius:5px;background:linear-gradient(#6a6a70,#46464c 50%,#3a3a40)"></div>
<svg class="a" style="left:1059px;top:197.1px" width="10" height="12"><path d="M0.5,0.5L9.5,6L0.5,11.5Z" fill="#fff"/></svg>
<div class="a" style="left:1054px;top:218.3px;width:30px;height:24px;border:1px solid #1a1a1a;border-radius:5px;background:linear-gradient(#6a6a70,#46464c 50%,#3a3a40)"></div>
<svg class="a" style="left:1059px;top:224.3px" width="10" height="12"><path d="M0.5,0.5L9.5,6L0.5,11.5Z" fill="#fff"/></svg>
<div class="a" style="left:1054px;top:245.5px;width:30px;height:24px;border:1px solid #1a1a1a;border-radius:5px;background:linear-gradient(#6a6a70,#46464c 50%,#3a3a40)"></div>
<svg class="a" style="left:1059px;top:251.5px" width="10" height="12"><path d="M0.5,0.5L9.5,6L0.5,11.5Z" fill="#fff"/></svg>
<div class="a" style="left:1054px;top:272.7px;width:30px;height:24px;border:1px solid #1a1a1a;border-radius:5px;background:linear-gradient(#6a6a70,#46464c 50%,#3a3a40)"></div>
<svg class="a" style="left:1059px;top:278.7px" width="10" height="12"><path d="M0.5,0.5L9.5,6L0.5,11.5Z" fill="#fff"/></svg>
<div class="a" style="left:1054px;top:299.9px;width:30px;height:24px;border:1px solid #1a1a1a;border-radius:5px;background:linear-gradient(#6a6a70,#46464c 50%,#3a3a40)"></div>
<svg class="a" style="left:1059px;top:305.9px" width="10" height="12"><path d="M0.5,0.5L9.5,6L0.5,11.5Z" fill="#fff"/></svg>
<div class="a" style="left:1054px;top:327.1px;width:30px;height:24px;border:1px solid #1a1a1a;border-radius:5px;background:linear-gradient(#6a6a70,#46464c 50%,#3a3a40)"></div>
<svg class="a" style="left:1059px;top:333.1px" width="10" height="12"><path d="M0.5,0.5L9.5,6L0.5,11.5Z" fill="#fff"/></svg>
<div class="a" style="left:1054px;top:354.3px;width:30px;height:24px;border:1px solid #1a1a1a;border-radius:5px;background:linear-gradient(#6a6a70,#46464c 50%,#3a3a40)"></div>
<svg class="a" style="left:1059px;top:360.3px" width="10" height="12"><path d="M0.5,0.5L9.5,6L0.5,11.5Z" fill="#fff"/></svg>
<div class="a" style="left:1054px;top:381.5px;width:30px;height:24px;border:1px solid #1a1a1a;border-radius:5px;background:linear-gradient(#6a6a70,#46464c 50%,#3a3a40)"></div>
<svg class="a" style="left:1059px;top:387.5px" width="10" height="12"><path d="M0.5,0.5L9.5,6L0.5,11.5Z" fill="#fff"/></svg>
<div class="a" style="left:1054px;top:408.7px;width:30px;height:24px;border:1px solid #1a1a1a;border-radius:5px;background:linear-gradient(#6a6a70,#46464c 50%,#3a3a40)"></div>
<svg class="a" style="left:1059px;top:414.7px" width="10" height="12"><path d="M0.5,0.5L9.5,6L0.5,11.5Z" fill="#fff"/></svg>
<div class="a" style="left:1054px;top:435.9px;width:30px;height:24px;border:1px solid #1a1a1a;border-radius:5px;background:linear-gradient(#6a6a70,#46464c 50%,#3a3a40)"></div>
<svg class="a" style="left:1059px;top:441.9px" width="10" height="12"><path d="M0.5,0.5L9.5,6L0.5,11.5Z" fill="#fff"/></svg>
<div class="a" style="left:1054px;top:463.1px;width:30px;height:24px;border:1px solid #1a1a1a;border-radius:5px;background:linear-gradient(#6a6a70,#46464c 50%,#3a3a40)"></div>
<svg class="a" style="left:1059px;top:469.1px" width="10" height="12"><path d="M0.5,0.5L9.5,6L0.5,11.5Z" fill="#fff"/></svg>
<div class="a" style="left:1054px;top:490.3px;width:30px;height:24px;border:1px solid #1a1a1a;border-radius:5px;background:linear-gradient(#6a6a70,#46464c 50%,#3a3a40)"></div>
<svg class="a" style="left:1059px;top:496.3px" width="10" height="12"><path d="M0.5,0.5L9.5,6L0.5,11.5Z" fill="#fff"/></svg>
</body></html>
